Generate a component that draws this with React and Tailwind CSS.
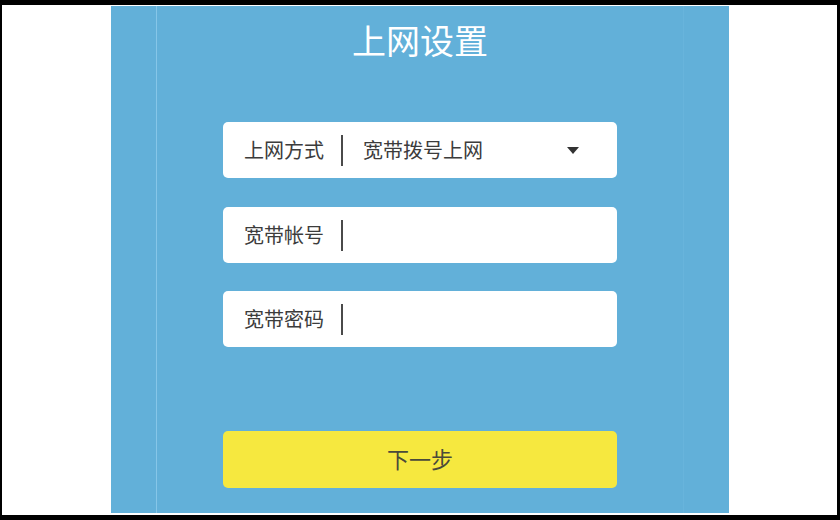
export default function App() {
  const font = { fontFamily: '"Noto Sans CJK SC", "Noto Sans", sans-serif' };

  const Field = ({ label, value, select, className = '' }) => (
    <div className={`flex h-[56px] w-[394px] items-center rounded-[5px] bg-white pl-[21px] ${className}`}>
      <span className="text-[20px] leading-none text-[#3c3c3c]">{label}</span>
      <span className="ml-[17px] h-[31px] w-[2px] bg-[#4a4a4a]" />
      {value && (
        <span className="ml-[20px] text-[20px] leading-none text-[#3c3c3c]">{value}</span>
      )}
      {select && (
        <svg className="ml-auto mr-[38px]" width="12" height="7" viewBox="0 0 12 7">
          <polygon points="0,0 12,0 6,7" fill="#333" />
        </svg>
      )}
    </div>
  );

  return (
    <div
      className="h-[520px] w-[840px] border-b-[5px] border-l-[2px] border-r-[3px] border-t-[5px] border-black bg-white"
      style={font}
    >
      <div className="ml-[109px] mt-[1px] flex h-[507px] w-[618px] bg-[#62b0d9]">
        <div className="w-[46px] border-r border-[#86c6e8]" />
        <div className="flex flex-1 flex-col items-center pt-[14px]">
          <h1 className="text-[34px] leading-[40px] text-white">上网设置</h1>
          <div className="mt-[62px] flex flex-col">
            <Field label="上网方式" value="宽带拨号上网" select />
            <Field label="宽带帐号" className="mt-[29px]" />
            <Field label="宽带密码" className="mt-[28px]" />
          </div>
          <button className="mt-[84px] flex h-[57px] w-[394px] items-center justify-center rounded-[5px] bg-[#f6e83f] pb-[3px] text-[22px] text-[#4a4a3a]">
            下一步
          </button>
        </div>
        <div className="w-[46px] border-l border-[#68b4dc]" />
      </div>
    </div>
  );
}
